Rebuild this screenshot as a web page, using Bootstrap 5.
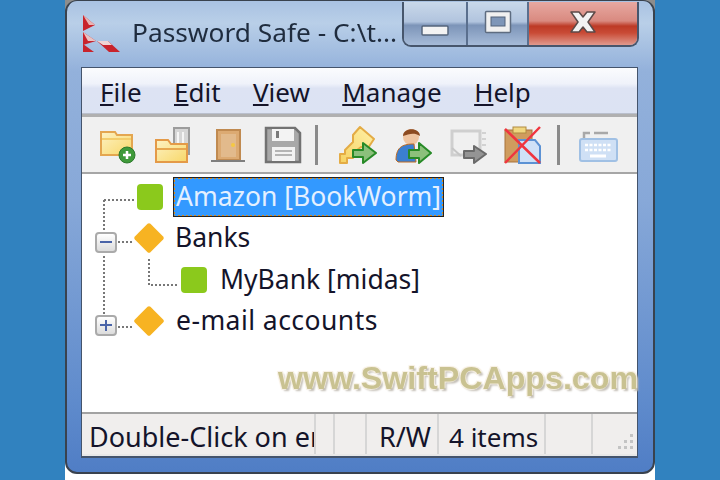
<!DOCTYPE html>
<html>
<head>
    <title>Password Safe</title>
    <link rel="stylesheet" href="https://cdn.jsdelivr.net/npm/bootstrap@5.3.0/dist/css/bootstrap.min.css">
    <style>
        body {
            margin: 0;
            width: 720px;
            height: 480px;
            overflow: hidden;
            background: #3182bf;
            font-family: "Noto Sans", "Liberation Sans", sans-serif;
            color: #14142a;
        }

        .desk {
            width: 590px;
            height: 480px;
            margin-left: 65px;
            background: linear-gradient(180deg, #8d8d8d 0, #8d8d8d 20px, #ffffff 20px);
            position: relative;
        }

        .win {
            height: 474px;
            border: 2px solid #39424e;
            border-top-width: 1px;
            border-radius: 12px;
            background: linear-gradient(180deg, #a9c2e2 0, #b9cfe8 22px, #93b1db 70px, #87a8d8 200px, #5f8bcc 400px, #4f7dc5 474px);
            padding: 0 15px 14px 14px;
            display: flex;
            flex-direction: column;
            filter: blur(.7px);
        }

        .win-head {
            height: 66px;
            flex: none;
        }

        .app-logo {
            margin-top: 0;
        }

        .win-title {
            margin-left: 11px;
            margin-top: -3px;
            font-size: 26.3px;
            color: #1f2c3e;
            white-space: nowrap;
        }

        .cap-btns {
            margin-left: auto;
            align-self: flex-start;
            height: 45px;
            border: 2px solid #47566c;
            border-top: 0;
            border-radius: 0 0 9px 9px;
            overflow: hidden;
            margin-top: 1px;
            margin-right: -1px;
        }

        .cap-btn {
            height: 100%;
            display: flex;
            align-items: center;
            justify-content: center;
            padding-bottom: 3px;
            background: linear-gradient(180deg, #c9d8ea 0, #b1c4de 46%, #7c94b8 54%, #a6bbd8 100%);
            border-right: 2px solid #5a6f8e;
        }

        .cap-min { width: 64px; align-items: flex-end; padding-bottom: 9px; }
        .cap-max { width: 61px; }

        .cap-close {
            width: 108px;
            border-right: 0;
            background: linear-gradient(180deg, #e7a8a1 0, #d98a80 44%, #bd3a26 56%, #c94b36 72%, #e09a8e 100%);
        }

        .client {
            flex: 1;
            min-height: 0;
            border: 1px solid #44546c;
            border-bottom-width: 2px;
            background: #fff;
            display: flex;
            flex-direction: column;
        }

        .menu-strip {
            height: 46px;
            flex: none;
            background: linear-gradient(180deg, #fbfcfe 0, #eff2fa 35%, #dde3f3 45%, #dce3f3 100%);
            font-size: 26px;
            padding-left: 18px;
            gap: 32.4px;
            border-bottom: 1px solid #b9bfcc;
        }

        .menu-strip span {
            line-height: 48px;
        }

        .tool-strip {
            height: 60px;
            flex: none;
            background: #f0f0f0;
            border-top: 3px solid #b0b0b0;
            border-bottom: 2px solid #a6a6a6;
            padding-left: 8px;
        }

        .tool-slot {
            width: 55px;
            flex: none;
            text-align: center;
        }

        .tool-sep {
            width: 3px;
            height: 40px;
            flex: none;
            background: #8a8a8a;
        }

        .sep-a { margin-left: 5px; margin-right: 12px; }
        .sep-b { margin-left: 7px; margin-right: 10px; }

        .tree-pane {
            flex: 1;
            min-height: 0;
            position: relative;
            padding-top: 2px;
            font-size: 26.5px;
            background: #fff;
        }

        .tree-lines {
            position: absolute;
            left: 0;
            top: 0;
        }

        .tree-row {
            height: 41.5px;
            position: relative;
            white-space: nowrap;
        }

        .lvl-a { padding-left: 13px; }
        .lvl-b { padding-left: 99px; }

        .node-toggle {
            width: 22px;
            height: 21px;
            flex: none;
            margin-top: 9px;
            margin-right: 16px;
            border: 2px solid #aaa;
            border-radius: 4px;
            background: linear-gradient(180deg, #fff 0, #dcdcdc 100%);
            position: relative;
        }

        .node-toggle::before {
            content: "";
            position: absolute;
            left: 3px;
            right: 3px;
            top: 7px;
            height: 2px;
            background: #4a64a8;
        }

        .node-open.plus::after {
            content: "";
            position: absolute;
            top: 3px;
            bottom: 3px;
            left: 8px;
            width: 2px;
            background: #4a64a8;
        }

        .node-spacer {
            width: 42px;
            flex: none;
        }

        .leaf-ico {
            width: 26px;
            height: 26px;
            flex: none;
            border-radius: 4px;
            background: #8bc91c;
        }

        .group-ico {
            width: 22px;
            height: 22px;
            flex: none;
            margin-left: 5px;
            margin-right: 5px;
            border-radius: 2px;
            background: #f7b322;
            transform: rotate(45deg);
        }

        .node-label {
            margin-left: 10px;
        }

        .leaf-label {
            margin-left: 13px;
        }

        .wide-label {
            margin-left: 11px;
            letter-spacing: .45px;
        }

        .node-sel {
            margin-left: 10px;
            padding: 0 1px;
            height: 40px;
            line-height: 34px;
            color: #e4f0ff;
            background: #3399ff;
            border: 2px dotted #d98a1c;
            outline: 1px solid #222;
            outline-offset: -1px;
        }

        .stat-strip {
            height: 44px;
            flex: none;
            background: #f0eeed;
            border-top: 2px solid #a2a2a2;
            font-size: 26px;
            border-bottom: 2px solid #e8e8e8;
        }

        .stat-pane {
            height: 100%;
            flex: none;
            overflow: hidden;
            white-space: nowrap;
            border-right: 2px solid #d6d6d6;
            line-height: 46px;
        }

        .stat-msg { width: 234px; padding-left: 7px; font-size: 27px; }
        .stat-a { width: 19px; }
        .stat-b { width: 32px; }
        .stat-rw { width: 72px; padding-left: 12px; font-size: 27px; }
        .stat-items { width: 107px; padding-left: 10px; }
        .stat-c { width: 47px; }
        .stat-grip { flex: 1; border-right: 0; position: relative; }

        .grip-svg {
            position: absolute;
            right: 2px;
            bottom: 3px;
        }

        .site-mark {
            position: absolute;
            left: 213px;
            top: 356px;
            font-family: "Liberation Sans", sans-serif;
            font-weight: 700;
            font-size: 32.2px;
            line-height: 44px;
            white-space: nowrap;
            color: #c9c291;
            text-shadow: -1px -1px 1px #f7f0e4, 1px -1px 1px #f7f0e4, -1px 1px 1px #f7f0e4, 2px 2px 2px #c2bdb4;
            filter: blur(.5px);
        }
    </style>
</head>
<body>
    <div class="desk">
        <div class="win">
            <div class="win-head d-flex align-items-center">
                <svg class="app-logo flex-none" width="40" height="40" viewBox="0 0 40 40">
                    <polygon points="2,1 14,11 2,17" fill="#c8232c"/>
                    <polygon points="2,1 14,11 8,11" fill="#e8b4b4"/>
                    <polygon points="2,18 15,27 2,31" fill="#c8232c"/>
                    <polygon points="2,18 15,27 7,27" fill="#e8c4c4"/>
                    <polygon points="2,30 13,38 2,38" fill="#c8232c"/>
                    <polygon points="16,27 27,27 39,38 28,38" fill="#c8232c"/>
                    <polygon points="16,27 27,27 31,31 22,31" fill="#efd4d4"/>
                </svg>
                <div class="win-title">Password Safe - C:\t...</div>
                <div class="cap-btns d-flex">
                    <div class="cap-btn cap-min">
                        <svg width="28" height="11" viewBox="0 0 28 11"><rect x="1" y="1" width="26" height="9" rx="1" fill="#f3f3f3" stroke="#56667c" stroke-width="1.5"/></svg>
                    </div>
                    <div class="cap-btn cap-max">
                        <svg width="28" height="24" viewBox="0 0 28 24"><rect x="1.5" y="1.5" width="25" height="21" rx="1" fill="#f0f0f0" stroke="#5e6c80" stroke-width="1.5"/><rect x="7" y="7" width="14" height="9" fill="#7e96b8" stroke="#52627a"/></svg>
                    </div>
                    <div class="cap-btn cap-close">
                        <svg width="28" height="24" viewBox="0 0 28 24"><path d="M2 2 L10 2 L14 7 L18 2 L26 2 L19 12 L26 22 L18 22 L14 17 L10 22 L2 22 L9 12 Z" fill="#f2f2f2" stroke="#5c4a48" stroke-width="1.5" stroke-linejoin="round"/></svg>
                    </div>
                </div>
            </div>

            <div class="client">
                <div class="menu-strip d-flex">
                    <span><u>F</u>ile</span>
                    <span><u>E</u>dit</span>
                    <span><u>V</u>iew</span>
                    <span><u>M</u>anage</span>
                    <span><u>H</u>elp</span>
                </div>

                <div class="tool-strip d-flex align-items-center">
                    <div class="tool-slot">
                        <svg width="38" height="38" viewBox="0 0 38 38">
                            <defs>
                                <linearGradient id="fold" x1="0" y1="0" x2="1" y2="1">
                                    <stop offset="0" stop-color="#fdf2c4"/>
                                    <stop offset="1" stop-color="#f8d768"/>
                                </linearGradient>
                                <linearGradient id="keyg" x1="1" y1="0" x2="0" y2="1">
                                    <stop offset="0" stop-color="#fff1a8"/>
                                    <stop offset="1" stop-color="#f6d262"/>
                                </linearGradient>
                            </defs>
                            <path d="M2 6 H16 L18 9 H33 V29 H2 Z" fill="url(#fold)" stroke="#e4a650" stroke-width="2"/>
                            <path d="M3 13 H32" stroke="#f4cd6b" stroke-width="2"/>
                            <circle cx="28" cy="29" r="8" fill="#3f9a3a" stroke="#2c7a2c"/>
                            <path d="M24 29 H32 M28 25 V33" stroke="#fff" stroke-width="2.5"/>
                        </svg>
                    </div>
                    <div class="tool-slot">
                        <svg width="38" height="38" viewBox="0 0 38 38">
                            <rect x="20" y="2" width="15" height="26" fill="#d6d6d6" stroke="#9c9c9c" stroke-width="2"/>
                            <path d="M24 6 V22 M29 6 V22" stroke="#f5f5f5" stroke-width="2"/>
                            <path d="M2 14 H14 L17 18 H33 V36 H2 Z" fill="url(#fold)" stroke="#e49a48" stroke-width="2"/>
                            <path d="M3 23 H32" stroke="#e8a850" stroke-width="2"/>
                        </svg>
                    </div>
                    <div class="tool-slot">
                        <svg width="38" height="38" viewBox="0 0 38 38">
                            <rect x="8" y="4" width="23" height="30" fill="#dcaa72" stroke="#c08a50" stroke-width="2"/>
                            <rect x="12" y="8" width="15" height="23" fill="#e2ba8c"/>
                            <circle cx="24" cy="19" r="2" fill="#f5c842"/>
                            <path d="M2 35 H36" stroke="#7f7f7f" stroke-width="2"/>
                        </svg>
                    </div>
                    <div class="tool-slot">
                        <svg width="38" height="38" viewBox="0 0 38 38">
                            <path d="M2 2 H31 L36 7 V36 H2 Z" fill="#a8a8a8" stroke="#727272" stroke-width="2.5"/>
                            <rect x="8" y="3" width="22" height="12" fill="#f3f3f3"/>
                            <rect x="12" y="5" width="3" height="7" fill="#7a7a7a"/>
                            <rect x="8" y="21" width="23" height="14" fill="#f2f2f2"/>
                            <path d="M11 25 H28 M11 29 H28" stroke="#a0a0a0" stroke-width="1.5"/>
                        </svg>
                    </div>
                    <div class="tool-sep sep-a"></div>
                    <div class="tool-slot">
                        <svg width="38" height="38" viewBox="0 0 38 38">
                            <path d="M21 1 L35 13 L29 22 L22 21 L14 27 V32 H8 V37 H1 V28 H6 V24 L14 16 V9 Z" fill="url(#keyg)" stroke="#e4ac45" stroke-width="2" stroke-linejoin="round"/>
                            <path d="M14 24 H24 V17 L37 27 L24 37 V31 H14 Z" fill="#8cc07c" stroke="#278a27" stroke-width="2" stroke-linejoin="round"/>
                        </svg>
                    </div>
                    <div class="tool-slot">
                        <svg width="38" height="38" viewBox="0 0 38 38">
                            <circle cx="17" cy="11" r="8" fill="#efc4a0"/>
                            <path d="M9 10 C9 1 26 1 26 10 C20 6 15 8 9 10 Z" fill="#8c4a20"/>
                            <path d="M2 34 C2 20 10 18 20 18 L22 36 H4 Z" fill="#3b7fd0" stroke="#c06a20"/>
                            <path d="M15 24 H25 V17 L37 27 L25 37 V32 H15 Z" fill="#8cc07c" stroke="#278a27" stroke-width="2" stroke-linejoin="round"/>
                        </svg>
                    </div>
                    <div class="tool-slot">
                        <svg width="38" height="38" viewBox="0 0 38 38">
                            <rect x="3" y="5" width="28" height="24" fill="#f0f0f0" stroke="#cfcfcf" stroke-width="3"/>
                            <path d="M3 22 L12 30" stroke="#c6c6c6" stroke-width="2"/>
                            <path d="M33 7 H37 M33 13 H37 M33 19 H37" stroke="#c8c8c8" stroke-width="1.5"/>
                            <path d="M15 25 H25 V20 L37 28 L25 37 V32 H15 Z" fill="#949494" stroke="#6a6a6a" stroke-width="2" stroke-linejoin="round"/>
                        </svg>
                    </div>
                    <div class="tool-slot">
                        <svg width="38" height="38" viewBox="0 0 38 38">
                            <rect x="1" y="4" width="27" height="32" fill="#cf9c5e" stroke="#a8733a"/>
                            <rect x="9" y="1" width="13" height="6" fill="#f0d680" stroke="#b08a40"/>
                            <path d="M15 14 H31 L36 20 V37 H15 Z" fill="#cfe1f7" stroke="#5c92d4" stroke-width="2"/>
                            <path d="M1 3 L36 37 M36 1 L1 37" stroke="#f0353f" stroke-width="2.5"/>
                        </svg>
                    </div>
                    <div class="tool-sep sep-b"></div>
                    <div class="tool-slot">
                        <svg width="40" height="38" viewBox="0 0 40 38">
                            <path d="M6 13 V7 H12 M16 7 H30" stroke="#a8a8a8" stroke-width="2.5" fill="none"/>
                            <rect x="2" y="13" width="37" height="22" rx="2" fill="#cfe0f5" stroke="#a0c0e4" stroke-width="2"/>
                            <path d="M7 19 H34 M7 24 H34" stroke="#fff" stroke-width="2.5" stroke-dasharray="3 1.5"/>
                            <path d="M12 30 H28" stroke="#fff" stroke-width="3"/>
                        </svg>
                    </div>
                </div>

                <div class="tree-pane">
                    <svg class="tree-lines" width="120" height="180" viewBox="0 0 120 180">
                        <g stroke="#777" stroke-width="2" stroke-dasharray="2 2" fill="none">
                            <path d="M22 26 H53"/>
                            <path d="M22 26 V57"/>
                            <path d="M22 82 V140"/>
                            <path d="M36 68 H50"/>
                            <path d="M67 85 V111 H96"/>
                            <path d="M36 153 H50"/>
                        </g>
                    </svg>

                    <div class="tree-row d-flex align-items-center lvl-a">
                        <div class="node-spacer"></div>
                        <div class="leaf-ico"></div>
                        <div class="node-sel">Amazon [BookWorm]</div>
                    </div>
                    <div class="tree-row d-flex align-items-center lvl-a">
                        <div class="node-toggle"></div>
                        <div class="group-ico"></div>
                        <div class="node-label">Banks</div>
                    </div>
                    <div class="tree-row d-flex align-items-center lvl-b">
                        <div class="leaf-ico"></div>
                        <div class="leaf-label">MyBank [midas]</div>
                    </div>
                    <div class="tree-row d-flex align-items-center lvl-a">
                        <div class="node-toggle node-open plus"></div>
                        <div class="group-ico"></div>
                        <div class="node-label wide-label">e-mail accounts</div>
                    </div>
                </div>

                <div class="stat-strip d-flex">
                    <div class="stat-pane stat-msg">Double-Click on entry</div>
                    <div class="stat-pane stat-a"></div>
                    <div class="stat-pane stat-b"></div>
                    <div class="stat-pane stat-rw">R/W</div>
                    <div class="stat-pane stat-items">4 items</div>
                    <div class="stat-pane stat-c"></div>
                    <div class="stat-pane stat-grip">
                        <svg class="grip-svg" width="20" height="20" viewBox="0 0 20 20" fill="#c4c4c4">
                            <rect x="15" y="3" width="3" height="3"/>
                            <rect x="9" y="9" width="3" height="3"/><rect x="15" y="9" width="3" height="3"/>
                            <rect x="3" y="15" width="3" height="3"/><rect x="9" y="15" width="3" height="3"/><rect x="15" y="15" width="3" height="3"/>
                        </svg>
                    </div>
                </div>
            </div>
        </div>
        <div class="site-mark">www.SwiftPCApps.com</div>
    </div>

    <script src="https://cdn.jsdelivr.net/npm/bootstrap@5.3.0/dist/js/bootstrap.bundle.min.js"></script>
</body>
</html>
